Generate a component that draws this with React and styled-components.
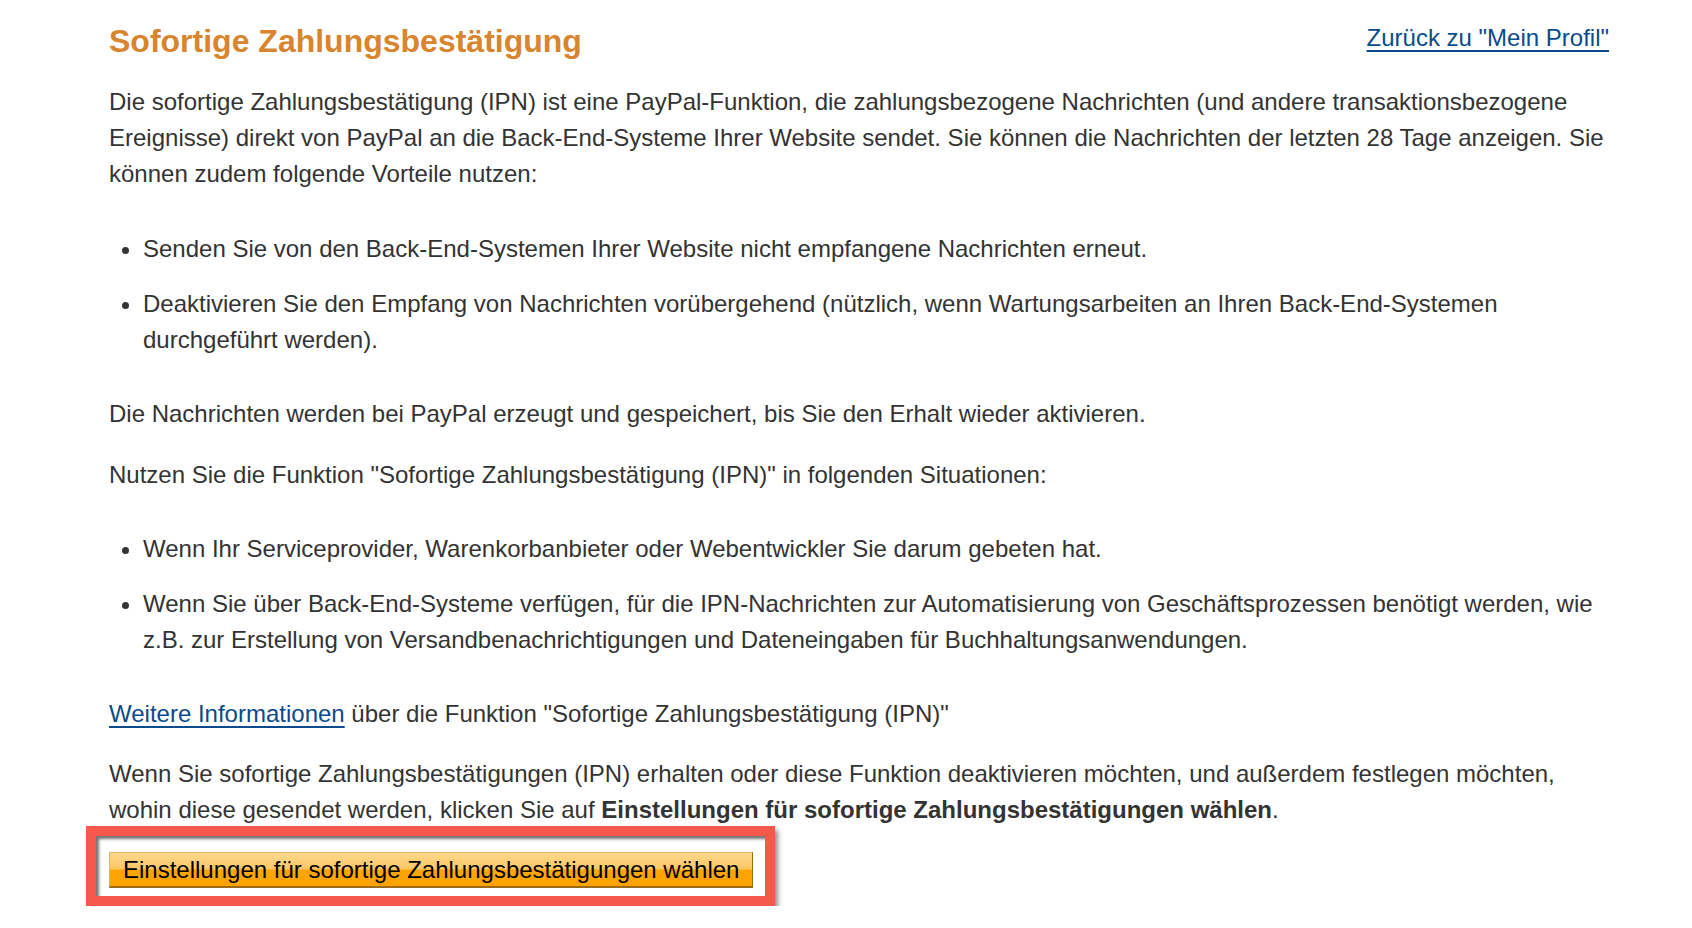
import React from "react";
import styled, { createGlobalStyle } from "styled-components";

const Global = createGlobalStyle`
  html, body { margin: 0; padding: 0; background: #ffffff; }
  body { font-family: "Liberation Sans", Arial, Helvetica, sans-serif; color: #333333; }
`;

const Page = styled.div`
  padding: 23px 83px 0 109px;
  font-size: 24px;
  line-height: 36px;
`;

const Header = styled.div`
  display: flex;
  justify-content: space-between;
  align-items: center;
  height: 36px;
`;

const Title = styled.h1`
  margin: 0;
  font-size: 32px;
  line-height: 36px;
  font-weight: bold;
  color: #d8852e;
`;

const Link = styled.a`
  color: #0b4a8b;
  text-decoration: underline;
  text-decoration-thickness: 2px;
  text-underline-offset: 4px;
  font-size: 24px;
  cursor: pointer;
`;

const BackLink = styled(Link)`
  margin-top: -6px;
`;

const P = styled.p`
  margin: ${(p) => p.$top}px 0 0;
`;

const List = styled.ul`
  margin: ${(p) => p.$top}px 0 0;
  padding: 0 0 0 34px;
  list-style: disc;
`;

const Item = styled.li`
  & + & { margin-top: 19px; }
`;

const Highlight = styled.div`
  display: inline-block;
  margin: -2px 0 0 -23px;
  border: 10px solid #f6584b;
  padding: 16px 12px 8px 13px;
  box-shadow: inset 3px 3px 3px rgba(0, 0, 0, 0.55),
    3px 4px 5px rgba(0, 0, 0, 0.45);
`;

const Button = styled.button`
  display: block;
  height: 36px;
  padding: 0 13px;
  font-family: "Liberation Sans", Arial, Helvetica, sans-serif;
  font-size: 24px;
  color: #000000;
  background: linear-gradient(
    to bottom,
    #ffd98c 0%,
    #ffc764 48%,
    #ffa600 52%,
    #ffa200 100%
  );
  border: 1px solid #e2b066;
  border-right-color: #9c6a12;
  border-bottom: 2px solid #9c6a12;
  border-radius: 0;
  cursor: pointer;
`;

export default function App() {
  return (
    <>
      <Global />
      <Page>
        <Header>
          <Title>Sofortige Zahlungsbestätigung</Title>
          <BackLink>Zurück zu "Mein Profil"</BackLink>
        </Header>
        <P $top={25}>
          Die sofortige Zahlungsbestätigung (IPN) ist eine PayPal-Funktion, die
          zahlungsbezogene Nachrichten (und andere transaktionsbezogene
          Ereignisse) direkt von PayPal an die Back-End-Systeme Ihrer Website
          sendet. Sie können die Nachrichten der letzten 28 Tage anzeigen. Sie
          können zudem folgende Vorteile nutzen:
        </P>
        <List $top={39}>
          <Item>
            Senden Sie von den Back-End-Systemen Ihrer Website nicht empfangene
            Nachrichten erneut.
          </Item>
          <Item>
            Deaktivieren Sie den Empfang von Nachrichten vorübergehend (nützlich,
            wenn Wartungsarbeiten an Ihren Back-End-Systemen durchgeführt
            werden).
          </Item>
        </List>
        <P $top={38}>
          Die Nachrichten werden bei PayPal erzeugt und gespeichert, bis Sie den
          Erhalt wieder aktivieren.
        </P>
        <P $top={25}>
          Nutzen Sie die Funktion "Sofortige Zahlungsbestätigung (IPN)" in
          folgenden Situationen:
        </P>
        <List $top={38}>
          <Item>
            Wenn Ihr Serviceprovider, Warenkorbanbieter oder Webentwickler Sie
            darum gebeten hat.
          </Item>
          <Item>
            Wenn Sie über Back-End-Systeme verfügen, für die IPN-Nachrichten zur
            Automatisierung von Geschäftsprozessen benötigt werden, wie z.B. zur
            Erstellung von Versandbenachrichtigungen und Dateneingaben für
            Buchhaltungsanwendungen.
          </Item>
        </List>
        <P $top={38}>
          <Link>Weitere Informationen</Link> über die Funktion "Sofortige
          Zahlungsbestätigung (IPN)"
        </P>
        <P $top={24}>
          Wenn Sie sofortige Zahlungsbestätigungen (IPN) erhalten oder diese
          Funktion deaktivieren möchten, und außerdem festlegen möchten, wohin
          diese gesendet werden, klicken Sie auf{" "}
          <b>Einstellungen für sofortige Zahlungsbestätigungen wählen</b>.
        </P>
        <Highlight>
          <Button>Einstellungen für sofortige Zahlungsbestätigungen wählen</Button>
        </Highlight>
      </Page>
    </>
  );
}
